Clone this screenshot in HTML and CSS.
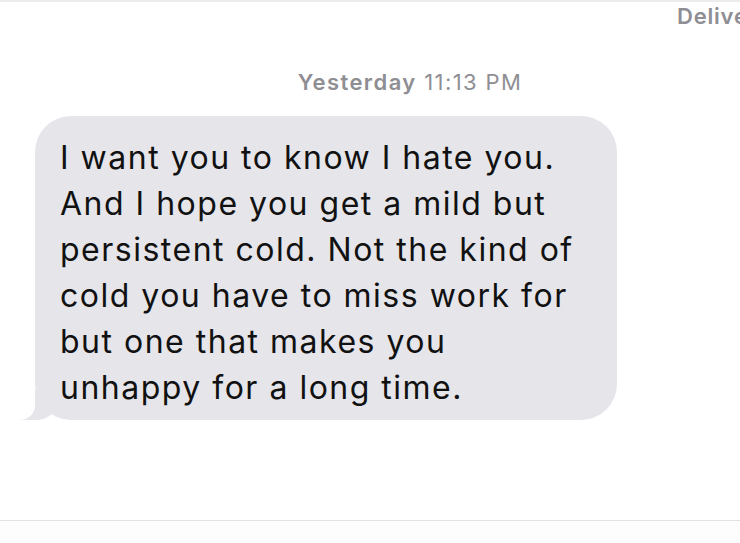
FILE: index.html
```
<!DOCTYPE html>
<html lang="en">
<head>
    <meta charset="UTF-8">
    <title>Messages</title>
    <link rel="stylesheet" href="styles.css">
</head>
<body>
  <div class="screen">
    <div class="status">Delivered</div>

    <div class="stamp"><b>Yesterday</b> 11:13 PM</div>

    <div class="thread">
      <div class="bubble">
        I want you to know I hate you.<br>
        And I hope you get a mild but<br>
        persistent cold. Not the kind of<br>
        cold you have to miss work for<br>
        but one that makes you<br>
        unhappy for a long time.
      </div>
    </div>
  </div>
  <div class="footer"></div>
</body>
</html>
```
FILE: styles.css
```
*{
  margin: 0;
  padding: 0;
  box-sizing: border-box;
}

body{
  background-color: #fdfdfd;
  font-family: Inter, "Liberation Sans", Arial, sans-serif;
  overflow: hidden;
}

.screen{
  height: 521px;
  background-color: white;
  border-top: 2px solid #ececec;
  border-bottom: 1px solid #e2e2e2;
  overflow: hidden;
}

.status{
  padding-left: 677px;
  padding-top: 1px;
  height: 30px;
  font-size: 22px;
  font-weight: 600;
  letter-spacing: 0.8px;
  color: #8e8e93;
  white-space: nowrap;
}

.stamp{
  margin-top: 37px;
  padding-left: 80px;
  text-align: center;
  font-size: 22px;
  letter-spacing: 1.4px;
  color: #8e8e93;
}

.stamp b{
  font-weight: 600;
}

.thread{
  padding-top: 21px;
  padding-left: 35px;
}

.bubble{
  position: relative;
  width: 582px;
  height: 304px;
  padding: 19px 0 0 25px;
  background-color: #e5e5ea;
  border-radius: 36px;
  font-size: 32px;
  line-height: 46px;
  letter-spacing: 1.5px;
  color: #111;
}

.bubble::before{
  content: "";
  position: absolute;
  left: -15px;
  bottom: 0;
  width: 40px;
  height: 30px;
  background-color: #e5e5ea;
  border-bottom-right-radius: 22px 28px;
}

.bubble::after{
  content: "";
  position: absolute;
  left: -30px;
  bottom: 0;
  width: 30px;
  height: 32px;
  background-color: white;
  border-bottom-right-radius: 16px 14px;
}
```
